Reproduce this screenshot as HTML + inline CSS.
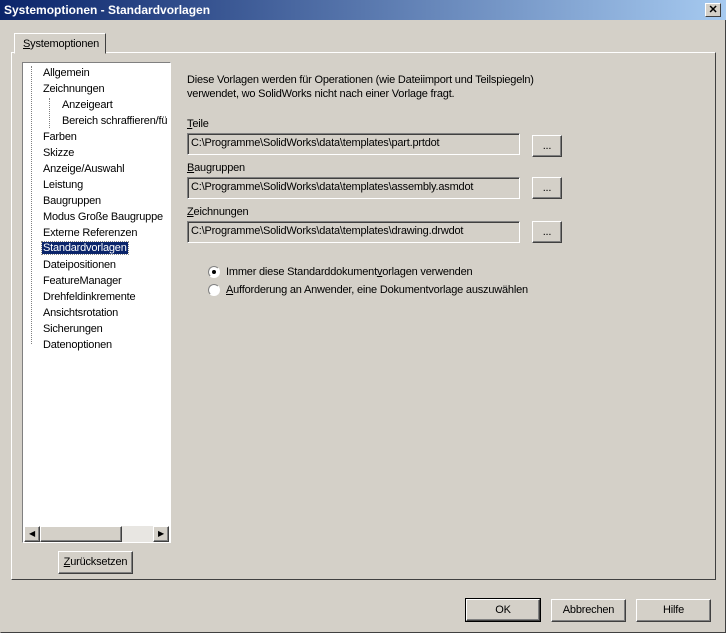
<!DOCTYPE html><html><head><style>
*{margin:0;padding:0;box-sizing:border-box}
body{width:726px;height:633px;background:#d4d0c8;font-family:"Liberation Sans",sans-serif;font-size:11px;letter-spacing:-0.2px;color:#000;position:relative;overflow:hidden}
.a{position:absolute}
.title{left:0;top:0;width:726px;height:20px;background:linear-gradient(90deg,#0a246a,#a6caf0);color:#fff;font-weight:bold;font-size:12px;padding:3px 4px;letter-spacing:0}
.x{right:5px;top:3px;width:16px;height:14px;background:#d4d0c8;border:1px solid;border-color:#fff #404040 #404040 #fff;font-size:11px;text-align:center;line-height:12px;color:#000;font-weight:bold}
.s{border:1px solid;border-color:#808080 #fff #fff #808080}
.field{height:22px;border:1px solid;border-color:#808080 #fff #fff #808080;box-shadow:inset 1px 1px 0 #404040;padding:3px 3px;white-space:nowrap}
.btn{border:1px solid;border-color:#fff #404040 #404040 #fff;box-shadow:inset -1px -1px 0 #808080;text-align:center;background:#d4d0c8}
.tree div{position:absolute;white-space:nowrap}
u{text-decoration:underline}
</style></head><body>
<div class="a" style="left:0;top:0;width:726px;height:633px;border:1px solid;border-color:#d4d0c8 #404040 #404040 #d4d0c8"></div>
<div class="a title">Systemoptionen - Standardvorlagen</div>
<div class="a x">✕</div>
<div class="a" style="left:11px;top:52px;width:705px;height:528px;border:1px solid;border-color:#fff #404040 #404040 #fff"></div>
<div class="a" style="left:14px;top:33px;width:92px;height:21px;background:#d4d0c8;border:1px solid;border-color:#fff #404040 #d4d0c8 #fff;padding:4px 8px"><u>S</u>ystemoptionen</div>
<div class="a s" style="left:22px;top:62px;width:149px;height:481px;background:#fff;overflow:hidden">
<div class="a" style="left:8px;top:3px;height:278px;border-left:1px dotted #808080"></div>
<div class="a" style="left:26px;top:35px;height:30px;border-left:1px dotted #808080"></div>
<div class="tree" style="position:absolute;left:0;top:0;width:149px">
<div style="left:20px;top:4px">Allgemein</div>
<div style="left:20px;top:20px">Zeichnungen</div>
<div style="left:39px;top:36px">Anzeigeart</div>
<div style="left:39px;top:52px">Bereich schraffieren/fü</div>
<div style="left:20px;top:68px">Farben</div>
<div style="left:20px;top:84px">Skizze</div>
<div style="left:20px;top:100px">Anzeige/Auswahl</div>
<div style="left:20px;top:116px">Leistung</div>
<div style="left:20px;top:132px">Baugruppen</div>
<div style="left:20px;top:148px">Modus Große Baugruppe</div>
<div style="left:20px;top:164px">Externe Referenzen</div>
<div style="left:19px;top:179px;background:#0a246a;color:#fff;padding:0 1px;outline:1px dotted #888">Standardvorlagen</div>
<div style="left:20px;top:196px">Dateipositionen</div>
<div style="left:20px;top:212px">FeatureManager</div>
<div style="left:20px;top:228px">Drehfeldinkremente</div>
<div style="left:20px;top:244px">Ansichtsrotation</div>
<div style="left:20px;top:260px">Sicherungen</div>
<div style="left:20px;top:276px">Datenoptionen</div>
</div>
<div class="a" style="left:1px;top:463px;width:145px;height:16px;background:#e8e6e2"></div>
<div class="a btn" style="left:1px;top:463px;width:16px;height:16px;font-size:8px;line-height:14px">◀</div>
<div class="a btn" style="left:17px;top:463px;width:82px;height:16px"></div>
<div class="a btn" style="left:130px;top:463px;width:16px;height:16px;font-size:8px;line-height:14px">▶</div>
</div>
<div class="a btn" style="left:58px;top:551px;width:75px;height:23px;line-height:21px"><u>Z</u>urücksetzen</div>
<div class="a" style="left:187px;top:73px;line-height:14px">Diese Vorlagen werden für Operationen (wie Dateiimport und Teilspiegeln)<br>verwendet, wo SolidWorks nicht nach einer Vorlage fragt.</div>
<div class="a" style="left:187px;top:118px"><u>T</u>eile</div>
<div class="a field" style="left:187px;top:133px;width:333px">C:\Programme\SolidWorks\data\templates\part.prtdot</div>
<div class="a btn" style="left:532px;top:135px;width:30px;height:22px;line-height:20px">...</div>
<div class="a" style="left:187px;top:162px"><u>B</u>augruppen</div>
<div class="a field" style="left:187px;top:177px;width:333px">C:\Programme\SolidWorks\data\templates\assembly.asmdot</div>
<div class="a btn" style="left:532px;top:177px;width:30px;height:22px;line-height:20px">...</div>
<div class="a" style="left:187px;top:206px"><u>Z</u>eichnungen</div>
<div class="a field" style="left:187px;top:221px;width:333px">C:\Programme\SolidWorks\data\templates\drawing.drwdot</div>
<div class="a btn" style="left:532px;top:221px;width:30px;height:22px;line-height:20px">...</div>
<div class="a" style="left:208px;top:266px;width:12px;height:12px;border-radius:50%;background:#fff;border:1px solid;border-color:#808080 #fff #fff #808080"><div class="a" style="left:3px;top:3px;width:4px;height:4px;border-radius:50%;background:#000"></div></div>
<div class="a" style="left:226px;top:266px">Immer diese Standarddokument<u>v</u>orlagen verwenden</div>
<div class="a" style="left:208px;top:284px;width:12px;height:12px;border-radius:50%;background:#fff;border:1px solid;border-color:#808080 #fff #fff #808080"></div>
<div class="a" style="left:226px;top:284px"><u>A</u>ufforderung an Anwender, eine Dokumentvorlage auszuwählen</div>
<div class="a" style="left:465px;top:598px;width:76px;height:24px;border:1px solid #000"><div class="btn" style="width:74px;height:22px;line-height:20px">OK</div></div>
<div class="a btn" style="left:551px;top:599px;width:75px;height:23px;line-height:21px">Abbrechen</div>
<div class="a btn" style="left:636px;top:599px;width:75px;height:23px;line-height:21px">Hilfe</div>
</body></html>
